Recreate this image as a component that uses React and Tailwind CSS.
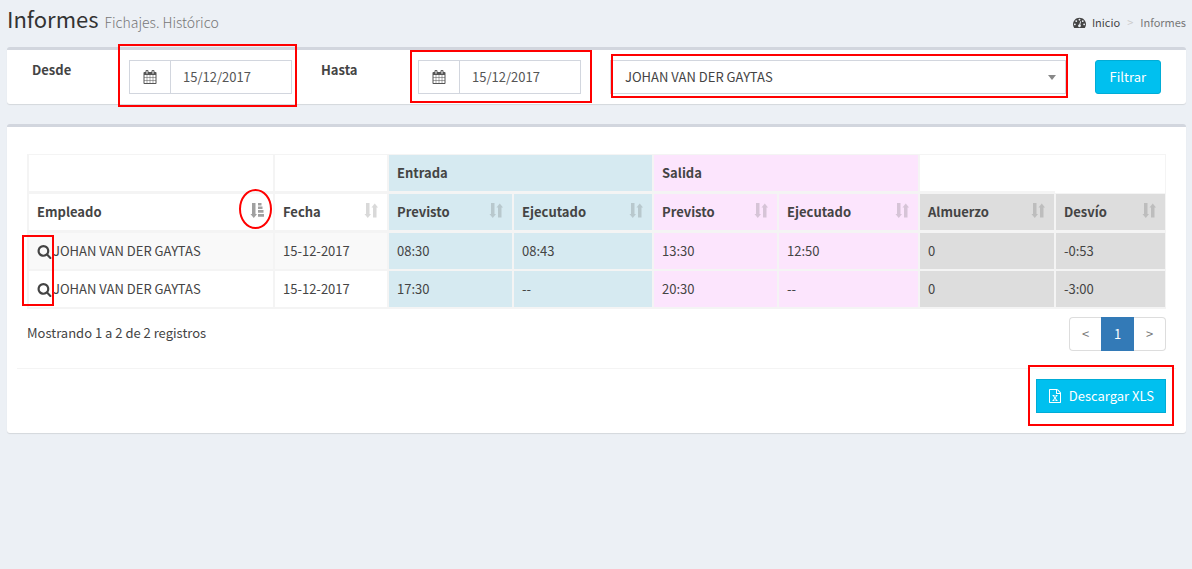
import React from "react";

const CALENDAR =
  "M192 1664h288v-288h-288v288zm352 0h320v-288h-320v288zm-352-352h288v-320h-288v320zm352 0h320v-320h-320v320zm-352-384h288v-288h-288v288zm736 736h320v-288h-320v288zm-384-736h320v-288h-320v288zm768 736h288v-288h-288v288zm-384-352h320v-320h-320v320zm-352-864v-288q0-13-9.5-22.5t-22.5-9.5h-64q-13 0-22.5 9.5t-9.5 22.5v288q0 13 9.5 22.5t22.5 9.5h64q13 0 22.5-9.5t9.5-22.5zm736 864h288v-320h-288v320zm-384-384h320v-288h-320v288zm384 0h288v-288h-288v288zm32-480v-288q0-13-9.5-22.5t-22.5-9.5h-64q-13 0-22.5 9.5t-9.5 22.5v288q0 13 9.5 22.5t22.5 9.5h64q13 0 22.5-9.5t9.5-22.5zm384-64v1280q0 52-38 90t-90 38h-1408q-52 0-90-38t-38-90v-1280q0-52 38-90t90-38h128v-96q0-66 47-113t113-47h64q66 0 113 47t47 113v96h384v-96q0-66 47-113t113-47h64q66 0 113 47t47 113v96h128q52 0 90 38t38 90z";
const SEARCH =
  "M1216 832q0-185-131.5-316.5t-316.5-131.5-316.5 131.5-131.5 316.5 131.5 316.5 316.5 131.5 316.5-131.5 131.5-316.5zm512 832q0 52-38 90t-90 38q-54 0-90-38l-343-342q-179 124-399 124-143 0-273.5-55.5t-225-150-150-225-55.5-273.5 55.5-273.5 150-225 225-150 273.5-55.5 273.5 55.5 225 150 150 225 55.5 273.5q0 220-124 399l343 343q37 37 37 90z";
const DASHBOARD =
  "M384 1152q0-53-37.5-90.5t-90.5-37.5-90.5 37.5-37.5 90.5 37.5 90.5 90.5 37.5 90.5-37.5 37.5-90.5zm192-448q0-53-37.5-90.5t-90.5-37.5-90.5 37.5-37.5 90.5 37.5 90.5 90.5 37.5 90.5-37.5 37.5-90.5zm428 481l101-382q6-26-7.5-48.5t-38.5-29.5-48 6.5-30 39.5l-101 382q-60 5-107 43.5t-63 98.5q-20 77 20 146t117 89 146-20 89-117q16-60-6-117t-72-91zm660-33q0-53-37.5-90.5t-90.5-37.5-90.5 37.5-37.5 90.5 37.5 90.5 90.5 37.5 90.5-37.5 37.5-90.5zm-640-640q0-53-37.5-90.5t-90.5-37.5-90.5 37.5-37.5 90.5 37.5 90.5 90.5 37.5 90.5-37.5 37.5-90.5zm448 192q0-53-37.5-90.5t-90.5-37.5-90.5 37.5-37.5 90.5 37.5 90.5 90.5 37.5 90.5-37.5 37.5-90.5zm320 448q0 261-141 483-19 29-54 29h-1402q-35 0-54-29-141-221-141-483 0-182 71-348t191-286 286-191 348-71 348 71 286 191 191 286 71 348z";
const EXCEL =
  "M1596 380q28 28 48 76t20 88v1152q0 40-28 68t-68 28h-1344q-40 0-68-28t-28-68v-1600q0-40 28-68t68-28h896q40 0 88 20t76 48zm-444-244v376h376q-10-29-22-41l-313-313q-12-12-41-22zm384 1528v-1024h-416q-40 0-68-28t-28-68v-416h-768v1536h1280zm-979-234v106h281v-106h-75l103-161q5-7 10-16.5t7.5-13.5 3.5-4h2q1 4 5 10 2 4 4.5 7.5t6 8 6.5 8.5l107 161h-76v106h291v-106h-68l-192-273 195-282h67v-107h-279v107h74l-103 159q-4 7-10 16.5t-9 13.5l-2 3h-2q-1-4-5-10-6-11-17-23l-106-159h76v-107h-290v107h68l189 272-194 283h-68z";

function Icon({ path, className }) {
  return (
    <svg viewBox="0 0 1792 1792" fill="currentColor" aria-hidden="true" className={className}>
      <path d={path} />
    </svg>
  );
}

function SortIcon({ active }) {
  return (
    <svg
      viewBox="0 0 14 16"
      fill="currentColor"
      aria-hidden="true"
      className={active ? "h-4 w-3.5 opacity-50" : "h-4 w-3.5 opacity-20"}
    >
      <path d="M2 1h3.500v11H7l-3.250 4L.5 12H2z" />
      {active ? (
        <path d="M8 1h3.500v2.500H8zM8 4.500h4.500V7H8zM8 8h5.500v2.800H8zM8 12h6.500v2.800H8z" />
      ) : (
        <path d="M9 15.500V5.500H7.500L10.750 1.500 14 5.500h-1.500v10z" />
      )}
    </svg>
  );
}

function Mark({ className }) {
  return <span aria-hidden="true" className={"pointer-events-none absolute border-2 border-[#f00] " + className} />;
}

function DateField({ id, label, mark }) {
  return (
    <div className="flex items-start">
      <label htmlFor={id} className="w-[97px] leading-5 font-bold">
        {label}
      </label>
      <div className="relative flex h-[34px] w-[163px] border border-[#d2d6de]">
        <span className="flex w-[41px] shrink-0 items-center justify-center border-r border-[#d2d6de] text-[#555]">
          <Icon path={CALENDAR} className="size-3.5" />
        </span>
        <input id={id} type="text" defaultValue="15/12/2017" className="w-full min-w-0 px-3 text-[#555] outline-none" />
        <Mark className={mark} />
      </div>
    </div>
  );
}

const WHITE = "";
const BLUE = "bg-[#d6eaf1]";
const PINK = "bg-[#fce5fd]";
const GRAY = "bg-[#ddd]";

const columns = [
  { name: "Empleado", width: "w-[246px]", tone: WHITE, active: true },
  { name: "Fecha", width: "w-[114px]", tone: WHITE },
  { name: "Previsto", width: "w-[125px]", tone: BLUE },
  { name: "Ejecutado", width: "w-[140px]", tone: BLUE },
  { name: "Previsto", width: "w-[125px]", tone: PINK },
  { name: "Ejecutado", width: "w-[141px]", tone: PINK },
  { name: "Almuerzo", width: "w-[136px]", tone: GRAY },
  { name: "Desvío", width: "w-[111px]", tone: GRAY },
];

const rows = [
  ["JOHAN VAN DER GAYTAS", "15-12-2017", "08:30", "08:43", "13:30", "12:50", "0", "-0:53"],
  ["JOHAN VAN DER GAYTAS", "15-12-2017", "17:30", "--", "20:30", "--", "0", "-3:00"],
];

const HEAD = "border border-b-2 border-[#f4f4f4] p-2 text-left leading-5 font-bold ";

function ReportTable() {
  return (
    <table className="w-full table-fixed border-separate border-spacing-0 border-b border-l border-[#f4f4f4]">
      <colgroup>
        {columns.map((c, i) => (
          <col key={i} className={c.width} />
        ))}
      </colgroup>
      <thead>
        <tr>
          <td className={HEAD} />
          <td className={HEAD} />
          <th colSpan={2} scope="colgroup" className={HEAD + BLUE}>
            Entrada
          </th>
          <th colSpan={2} scope="colgroup" className={HEAD + PINK}>
            Salida
          </th>
          <td className="border-t border-b-2 border-l border-[#f4f4f4]" />
          <td className="border-t border-r border-[#f4f4f4]" />
        </tr>
        <tr>
          {columns.map((c, i) => (
            <th key={i} scope="col" aria-sort={c.active ? "ascending" : "none"} className={HEAD + c.tone}>
              <button type="button" className="flex w-full justify-between pr-px font-bold">
                {c.name}
                <span className="relative">
                  <SortIcon active={c.active} />
                  {c.active && <Mark className="-top-[13px] -left-[11px] h-10 w-[33px] rounded-[50%]" />}
                </span>
              </button>
            </th>
          ))}
        </tr>
      </thead>
      <tbody>
        {rows.map((row, r) => (
          <tr key={r} className={r === 0 ? "bg-[#f9f9f9]" : "bg-white"}>
            {row.map((value, i) => (
              <td key={i} className={"border border-[#f4f4f4] p-2 leading-5 " + columns[i].tone}>
                {i === 0 ? (
                  <div className="relative flex items-center gap-px">
                    <a href="#detalle" aria-label="Ver detalle">
                      <Icon path={SEARCH} className="size-[15px]" />
                    </a>
                    {value}
                    {r === 0 && <Mark className="-top-1.5 -left-[15px] h-[71px] w-8" />}
                  </div>
                ) : (
                  value
                )}
              </td>
            ))}
          </tr>
        ))}
      </tbody>
    </table>
  );
}

const PANEL = "rounded-[3px] border-t-3 border-[#d2d6de] bg-white shadow-[0_1px_1px_rgba(0,0,0,0.1)] ";

export default function App() {
  return (
    <div className="min-h-screen bg-[#ecf0f5] pr-1.5 pl-[7px] font-['Noto_Sans_CJK_SC','Noto_Sans',sans-serif] text-[13px] leading-5 text-[#444]">
      <header className="flex h-[47px] items-start justify-between">
        <h1 className="flex items-baseline gap-1.5 text-[22px] leading-9 text-[#333]">
          Informes
          <small className="text-sm font-light text-[#777]">Fichajes. Histórico</small>
        </h1>
        <nav aria-label="Ruta" className="flex items-center pt-3 text-[11px]">
          <a href="#inicio" className="flex items-center gap-1.5">
            <Icon path={DASHBOARD} className="size-[13px]" />
            Inicio
          </a>
          <span className="px-[7px] text-[#ccc]">&gt;</span>
          <span className="text-[#777]">Informes</span>
        </nav>
      </header>

      <main className="flex flex-col gap-5">
        <form className={PANEL + "flex items-start gap-[29px] px-[25px] py-2.5"}>
          <DateField id="desde" label="Desde" mark="-top-[17px] -left-3 h-[63px] w-[179px]" />
          <DateField id="hasta" label="Hasta" mark="-top-[11px] -left-[9px] h-[53px] w-[182px]" />
          <div className="relative h-[34px] min-w-0 flex-1">
            <select
              aria-label="Empleado"
              className="h-full w-full appearance-none border border-[#d2d6de] bg-white px-3.5 text-[#444] outline-none"
            >
              <option>JOHAN VAN DER GAYTAS</option>
            </select>
            <svg
              viewBox="0 0 8 5"
              fill="#888"
              aria-hidden="true"
              className="pointer-events-none absolute top-[15px] right-2.5 h-[5px] w-2"
            >
              <path d="M0 0h8L4 5z" />
            </svg>
            <Mark className="-top-1.5 -right-0.5 left-px h-11" />
          </div>
          <button type="button" className="h-[34px] rounded-[3px] border border-[#00acd6] bg-[#00c0ef] px-3.5 text-white">
            Filtrar
          </button>
        </form>

        <section className={PANEL + "px-2.5 pb-5"}>
          <div className="px-2.5 pt-[27px]">
            <ReportTable />
            <div className="flex items-start justify-between pt-2">
              <p className="pt-1.5">Mostrando 1 a 2 de 2 registros</p>
              <nav aria-label="Paginación" className="flex h-[34px] text-[#777]">
                <a
                  href="#anterior"
                  aria-label="Anterior"
                  className="flex w-8 items-center justify-center rounded-l border border-r-0 border-[#ddd]"
                >
                  &lt;
                </a>
                <a
                  href="#pagina-1"
                  aria-current="page"
                  className="flex w-[33px] items-center justify-center bg-[#337ab7] text-white"
                >
                  1
                </a>
                <a
                  href="#siguiente"
                  aria-label="Siguiente"
                  className="flex w-8 items-center justify-center rounded-r border border-l-0 border-[#ddd]"
                >
                  &gt;
                </a>
              </nav>
            </div>
          </div>
          <div className="mt-[17px] flex justify-end border-t border-[#f4f4f4] px-2.5 pt-2.5">
            <div className="relative">
              <button
                type="button"
                className="flex h-[34px] items-center gap-[7px] border border-[#00acd6] bg-[#00c0ef] px-[11px] text-white"
              >
                <Icon path={EXCEL} className="size-3.5" />
                Descargar XLS
              </button>
              <Mark className="-inset-x-2 -top-3.5 -bottom-[13px]" />
            </div>
          </div>
        </section>
      </main>
    </div>
  );
}
